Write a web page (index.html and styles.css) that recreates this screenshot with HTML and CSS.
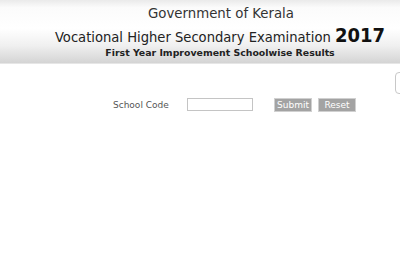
FILE: index.html
```html
<!DOCTYPE html>
<html>
<head>
<meta charset="utf-8">
<link rel="stylesheet" href="styles.css">
</head>
<body>
<div class="header">
  <div class="gov">Government of Kerala</div>
  <div class="exam">Vocational Higher Secondary Examination <span class="year">2017</span></div>
  <div class="sub">First Year Improvement Schoolwise Results</div>
</div>
<div class="corner"></div>
<form class="form">
  <label class="label">School Code</label>
  <input class="code" type="text">
  <button class="btn submit" type="button">Submit</button>
  <button class="btn" type="button">Reset</button>
</form>
</body>
</html>
```
FILE: styles.css
```css
html, body {
  margin: 0;
  padding: 0;
  background: #fff;
}
body {
  font-family: "DejaVu Sans Condensed", "DejaVu Sans", sans-serif;
  color: #222;
  position: relative;
  width: 400px;
  height: 266px;
  overflow: hidden;
}
.header {
  height: 64px;
  background: linear-gradient(#eaeaea 0%, #fbfbfb 12%, #ffffff 45%, #f0f0f0 72%, #d4d4d4 100%);
  border-bottom: 1px solid #e6e6e6;
  text-align: center;
  box-sizing: border-box;
  padding-top: 3px;
}
.gov {
  font-size: 14.8px;
  line-height: 20px;
  color: #333;
  padding-left: 42px;
}
.exam {
  font-size: 14.6px;
  line-height: 22px;
  margin-top: 2px;
  color: #222;
  padding-left: 40px;
  white-space: nowrap;
}
.year {
  font-size: 20px;
  line-height: 20px;
  font-weight: bold;
  color: #111;
}
.sub {
  font-family: "DejaVu Sans", sans-serif;
  font-size: 9.4px;
  font-weight: bold;
  line-height: 12px;
  margin-top: -1px;
  color: #222;
  padding-left: 40px;
  white-space: nowrap;
}
.corner {
  position: absolute;
  left: 395px;
  top: 72px;
  width: 12px;
  height: 20px;
  border: 1px solid #c8c8c8;
  border-radius: 4px;
}
.form {
  display: flex;
  align-items: center;
  margin: 33px 0 0 113px;
  height: 15px;
}
.label {
  font-family: "DejaVu Sans", sans-serif;
  font-size: 9px;
  color: #555;
  width: 74px;
}
.code {
  width: 66px;
  height: 13px;
  box-sizing: border-box;
  border: 1px solid #c4c4c4;
  padding: 0;
  margin: 0 21px 0 0;
}
.btn {
  font-family: "DejaVu Sans", sans-serif;
  font-size: 9px;
  color: #fff;
  background: #a3a3a3;
  border: 1px solid #d0d0d0;
  width: 38px;
  height: 14px;
  padding: 0;
  margin: 0 6px 0 0;
  line-height: 12px;
}
```
